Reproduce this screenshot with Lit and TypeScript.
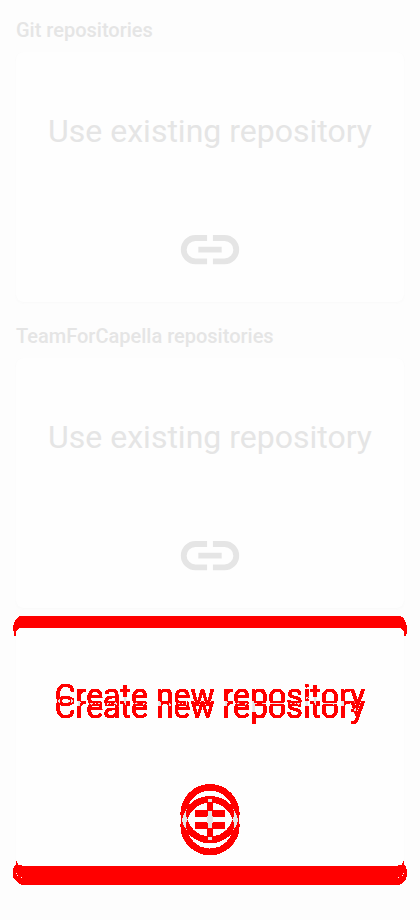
import { LitElement, html, css, svg } from "lit";
import { customElement } from "lit/decorators.js";

const LINK = "M440-280H280q-83 0-141.5-58.5T80-480q0-83 58.5-141.5T280-680h160v80H280q-50 0-85 35t-35 85q0 50 35 85t85 35h160v80ZM320-440v-80h320v80H320Zm200 160v-80h160q50 0 85-35t35-85q0-50-35-85t-85-35H520v-80h160q83 0 141.5 58.5T880-480q0 83-58.5 141.5T680-280H520Z";
const ADD = "M440-280h80v-160h160v-80H520v-160h-80v160H280v80h160v160Zm40 200q-83 0-156-31.5T197-197q-54-54-85.5-127T80-480q0-83 31.5-156T197-763q54-54 127-85.5T480-880q83 0 156 31.5T763-763q54 54 85.5 127T880-480q0 83-31.5 156T763-197q-54 54-127 85.5T480-80Zm0-80q134 0 227-93t93-227q0-134-93-227t-227-93q-134 0-227 93t-93 227q0 134 93 227t227 93Z";

@customElement("app-root")
export class AppRoot extends LitElement {
  static styles = css`
    :host { display: block; height: 920px; background: #fdfdfd; font-family: Roboto, sans-serif; color: #e5e5e5; overflow: hidden; }
    main { padding: 16px 16px 0; }
    h2 { margin: 0 0 8px; font-size: 20px; line-height: 28px; font-weight: 500; }
    .card { box-sizing: border-box; height: 250px; border-radius: 8px; background: #fefefe; box-shadow: 0 1px 3px #f9f9f9; }
    .first { margin-bottom: 20px; }
    .content { height: 250px; display: flex; flex-direction: column; align-items: center; }
    .label { margin-top: 60px; font-size: 32px; line-height: 38px; white-space: nowrap; }
    .icon { display: block; width: 70px; height: 70px; margin-top: 65px; fill: currentColor; }
    .changed { position: relative; margin-top: 8px; }
    .changed .content { position: relative; color: #000; filter: url(#difference); }
    .bands { position: absolute; left: -16px; top: -16px; fill: #f00; }
    .defs { position: absolute; width: 0; height: 0; }
  `;

  private content(label: string, path: string) {
    return html`<div class="content">
      <div class="label">${label}</div>
      <svg class="icon" viewBox="0 -955 960 960">${svg`<path d=${path} />`}</svg>
    </div>`;
  }

  render() {
    return html`
      <svg class="defs">
        <filter id="difference" x="0" y="0" width="1" height="1.1" color-interpolation-filters="sRGB">
          <feOffset in="SourceAlpha" dy="12" result="moved" />
          <feComposite in="SourceAlpha" in2="moved" operator="in" result="shared" />
          <feFlood flood-color="#e5e5e5" />
          <feComposite in2="shared" operator="in" result="base" />
          <feComposite in="SourceAlpha" in2="moved" operator="arithmetic" k2="1" k3="-1" result="before" />
          <feComposite in="moved" in2="SourceAlpha" operator="arithmetic" k2="1" k3="-1" result="after" />
          <feComposite in="before" in2="after" operator="arithmetic" k2="1" k3="1" />
          <feComponentTransfer result="mask"><feFuncA type="linear" slope="120" intercept="-5" /></feComponentTransfer>
          <feFlood flood-color="#ff0000" />
          <feComposite in2="mask" operator="in" result="edges" />
          <feMerge><feMergeNode in="base" /><feMergeNode in="edges" /></feMerge>
        </filter>
      </svg>
      <main>
        <h2>Git repositories</h2>
        <div class="card first">${this.content("Use existing repository", LINK)}</div>
        <h2>TeamForCapella repositories</h2>
        <div class="card">${this.content("Use existing repository", LINK)}</div>
        <div class="card changed">
          <svg class="bands" width="420" height="290" viewBox="0 600 420 290" shape-rendering="crispEdges">
            <rect x="16" y="628" width="388" height="245" rx="8" fill="#fefefe" />
            <path d="M20 616H400L402 617L404 619L406 623L407 627V632L406 636H404V632L402 629L400 628H20L18 629L16 632V636H14V632L13 631V627L14 623L16 619L18 617Z" />
            <path d="M22 866H398V865H402L403 861H404V864L406 867L407 870V876L406 879L404 881L401 884L398 885H22L19 884L16 881L14 879L13 876V870L14 867L16 864V861H17L18 865H22Z" />
            <path fill="#fefefe" d="M16 873h1v1h-1zM17 875h1v1h-1zM21 877h1v1h-1zM403 873h1v1h-1zM402 875h1v1h-1zM398 877h1v1h-1z" />
          </svg>
          ${this.content("Create new repository", ADD)}
        </div>
      </main>
    `;
  }
}
